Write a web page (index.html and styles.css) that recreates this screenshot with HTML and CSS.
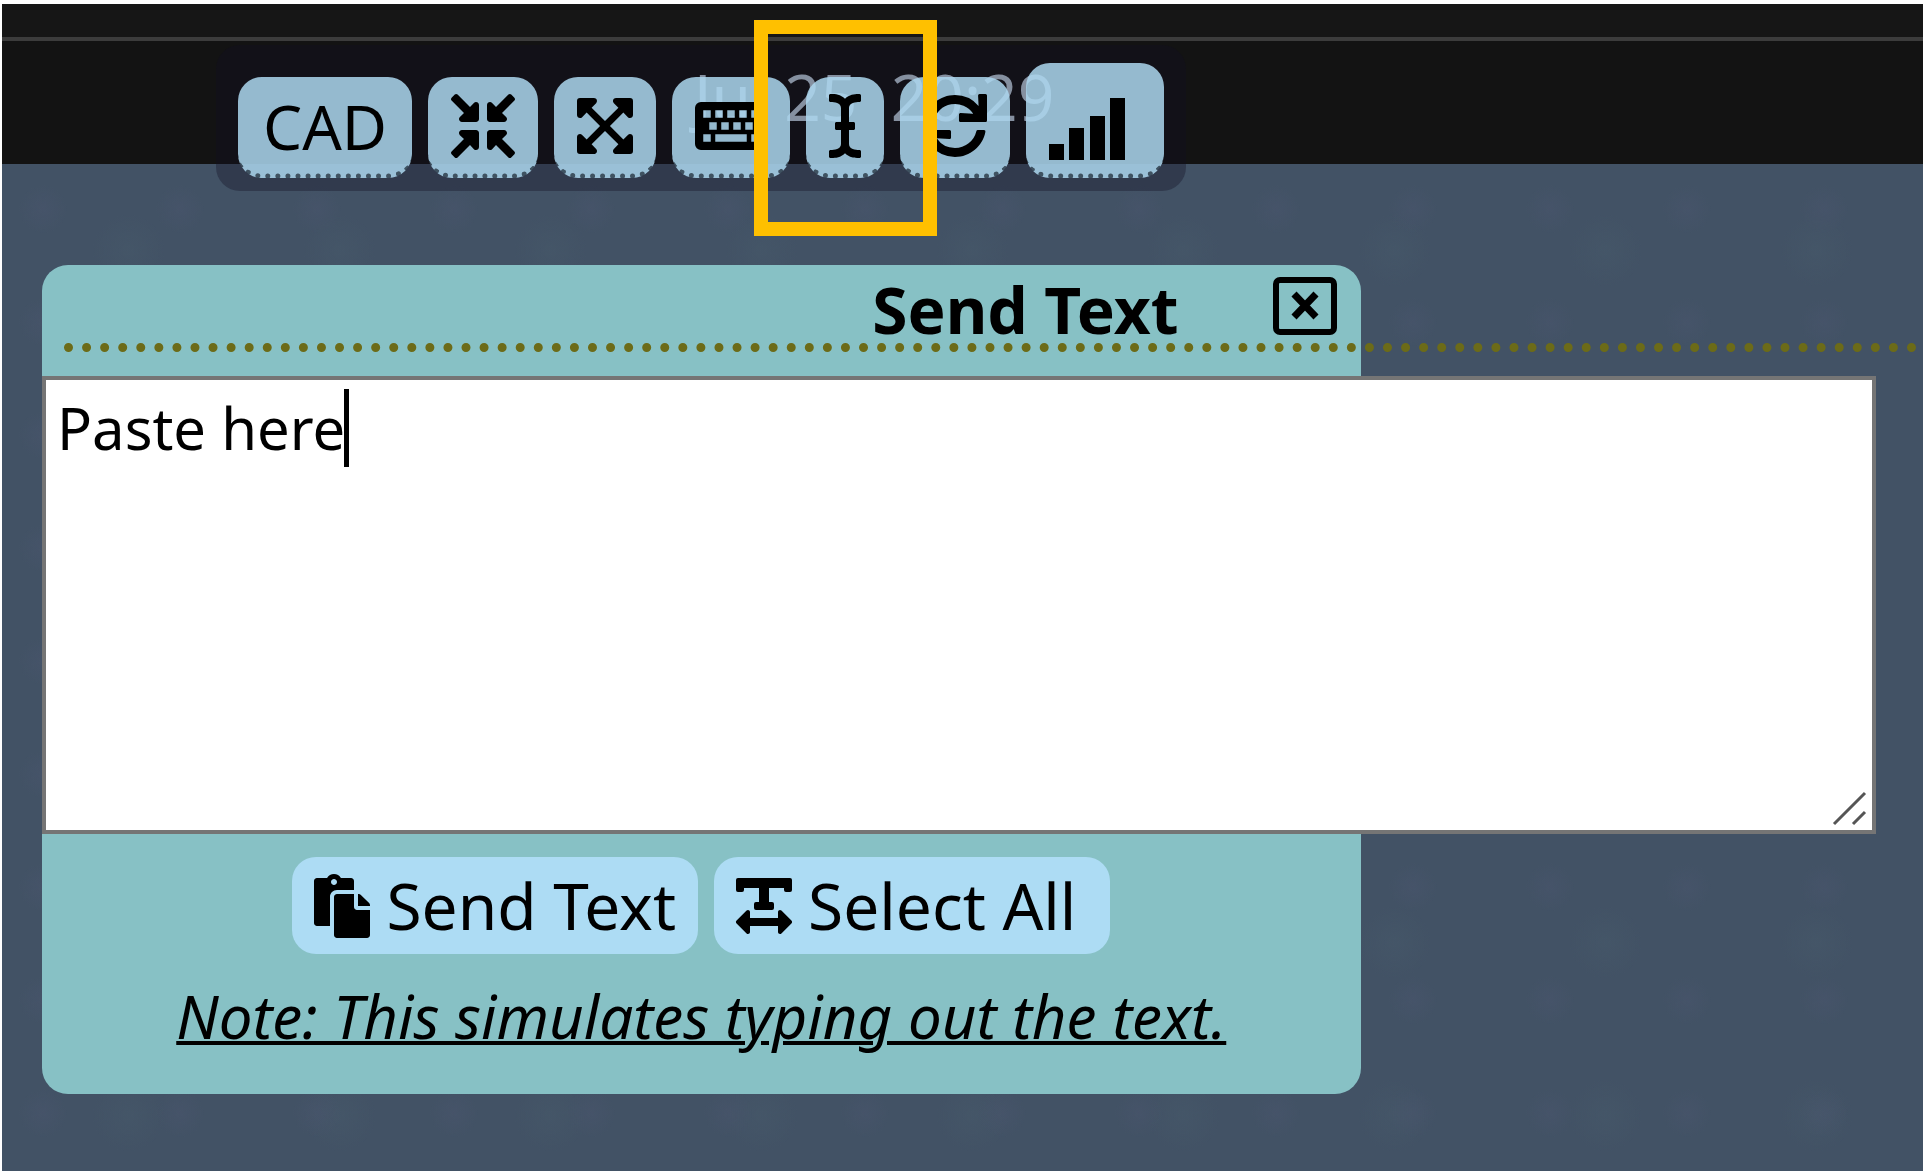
FILE: index.html
```html
<!DOCTYPE html>
<html lang="en">
<head>
<meta charset="utf-8">
<meta name="viewport" content="width=device-width, initial-scale=1">
<title>Send Text</title>
<link rel="stylesheet" href="styles.css">
</head>
<body>
<div class="screen">
  <div class="window-strip"></div>
  <header class="top-bar"><time class="clock">Jul 25  20:29</time></header>

  <div class="toolbar" role="toolbar" aria-label="Console controls">
    <button class="tool tool-text" type="button">CAD</button>
    <button class="tool" type="button" aria-label="Shrink">
      <svg width="64" height="64" viewBox="0 0 512 512"><path d="M200 288H88c-21.400 0-32.100 25.800-17 41l32.900 31-99.200 99.300c-6.200 6.200-6.200 16.400 0 22.600l25.400 25.400c6.200 6.200 16.400 6.200 22.600 0L152 408l31.100 33c15.100 15.100 40.900 4.400 40.900-17V312c0-13.300-10.700-24-24-24zm112-64h112c21.400 0 32.100-25.900 17-41l-33-31 99.300-99.300c6.200-6.200 6.200-16.400 0-22.600L481.900 4.700c-6.200-6.200-16.400-6.200-22.600 0L360 104l-31.100-33C313.800 55.900 288 66.600 288 88v112c0 13.300 10.700 24 24 24zm96 136l33-31.100c15.100-15.100 4.400-40.900-17-40.900H312c-13.300 0-24 10.700-24 24v112c0 21.400 25.900 32.100 41 17l31-32.900 99.300 99.300c6.200 6.200 16.400 6.200 22.600 0l25.400-25.400c6.200-6.200 6.200-16.400 0-22.600L408 360zM183 71.100L152 104 52.700 4.700c-6.200-6.200-16.400-6.200-22.600 0L4.700 30.100c-6.200 6.200-6.200 16.400 0 22.600L104 152l-33 31.100C55.900 198.200 66.600 224 88 224h112c13.300 0 24-10.700 24-24V88c0-21.300-25.900-32-41-16.900z"/></svg>
    </button>
    <button class="tool" type="button" aria-label="Expand">
      <svg width="56" height="64" viewBox="0 0 448 512"><path d="M448 344v112a23.940 23.940 0 0 1-24 24H312c-21.390 0-32.090-25.900-17-41l36.200-36.200L224 295.600 116.770 402.900 153 439c15.090 15.100 4.390 41-17 41H24a23.940 23.940 0 0 1-24-24V344c0-21.400 25.890-32.100 41-17l36.190 36.200L184.460 256 77.180 148.700 41 185c-15.100 15.100-41 4.400-41-17V56a23.940 23.940 0 0 1 24-24h112c21.390 0 32.090 25.900 17 41l-36.200 36.200L224 216.400l107.230-107.300L295 73c-15.090-15.100-4.390-41 17-41h112a23.940 23.940 0 0 1 24 24v112c0 21.400-25.890 32.100-41 17l-36.190-36.200L263.540 256l107.280 107.300L407 327.100c15.100-15.200 41-4.500 41 16.900z"/></svg>
    </button>
    <button class="tool" type="button" aria-label="Keyboard">
      <svg width="72" height="64" viewBox="0 0 576 512"><path fill-rule="evenodd" d="M48 64h480a48 48 0 0 1 48 48v288a48 48 0 0 1-48 48H48a48 48 0 0 1-48-48V112a48 48 0 0 1 48-48zM66 130v60h60v-60zm96 0v60h60v-60zm96 0v60h60v-60zm96 0v60h60v-60zm96 0v60h60v-60zM114 226v60h60v-60zm96 0v60h60v-60zm96 0v60h60v-60zm96 0v60h60v-60zM66 322v60h60v-60zm96 0v60h252v-60zm288 0v60h60v-60z"/></svg>
    </button>
    <button class="tool" type="button" aria-label="Send text">
      <svg width="32" height="64" viewBox="0 0 256 512"><path d="M256 52.048V12.065C256 5.496 250.726.148 244.158.019 211.621-.621 166.469.011 128 37.959 90.266.736 46.979-.114 11.913.114 5.318.157 0 5.519 0 12.114v39.645c0 6.687 5.458 12.078 12.145 11.998C38.111 63.447 96 67.243 96 112.182V224H60c-6.627 0-12 5.373-12 12v40c0 6.627 5.373 12 12 12h36v112c0 44.932-56.075 48.031-83.950 47.959C5.404 447.942 0 453.306 0 459.952v39.983c0 6.569 5.274 11.917 11.842 12.046 32.537.64 77.689.008 116.158-37.940 37.734 37.223 81.021 38.073 116.087 37.845 6.595-.043 11.913-5.405 11.913-12V460.240c0-6.687-5.458-12.078-12.145-11.998C217.889 448.553 160 444.939 160 400V288h36c6.627 0 12-5.373 12-12v-40c0-6.627-5.373-12-12-12h-36V112.182c0-44.932 56.075-48.213 83.950-48.142 6.646.018 12.050-5.346 12.050-11.992z"/></svg>
    </button>
    <button class="tool" type="button" aria-label="Reconnect">
      <svg width="64" height="64" viewBox="0 0 512 512"><path d="M440.650 12.570l4 82.770A247.160 247.160 0 0 0 255.830 8C134.730 8 33.910 94.920 12.290 209.820A12 12 0 0 0 24.090 224h49.050a12 12 0 0 0 11.670-9.260 175.910 175.910 0 0 1 317-56.940l-101.460-4.860a12 12 0 0 0-12.570 12v47.410a12 12 0 0 0 12 12H500a12 12 0 0 0 12-12V12a12 12 0 0 0-12-12h-47.370a12 12 0 0 0-11.980 12.570zM255.830 432a175.610 175.610 0 0 1-146-77.800l101.800 4.870a12 12 0 0 0 12.570-12v-47.400a12 12 0 0 0-12-12H12a12 12 0 0 0-12 12V500a12 12 0 0 0 12 12h47.350a12 12 0 0 0 12-12.600l-4.150-82.570A247.170 247.170 0 0 0 255.830 504c121.110 0 221.930-86.920 243.550-201.820a12 12 0 0 0-11.800-14.180h-49.050a12 12 0 0 0-11.670 9.260A175.860 175.860 0 0 1 255.830 432z"/></svg>
    </button>
    <button class="tool tool-signal" type="button" aria-label="Signal strength">
      <svg width="92" height="64" viewBox="0 0 92 64"><path d="M0 50h15v16H0zM20 34h15v32H20zM41 22h15v44H41zM61 4h15v62H61z"/></svg>
    </button>
  </div>
  <div class="highlight"></div>

  <main class="desktop">
    <section class="panel" aria-labelledby="panel-title">
      <div class="panel-head">
        <h1 class="panel-title" id="panel-title">Send Text</h1>
        <button class="close" type="button" aria-label="Close">
          <svg width="64" height="58" viewBox="0 0 64 58"><rect x="3" y="3" width="58" height="52" rx="4" fill="none" stroke="#000" stroke-width="6"/><path d="M21 17l22 23M43 17L21 40" fill="none" stroke="#000" stroke-width="7"/></svg>
        </button>
      </div>
      <hr class="rule">
      <div class="editor">
        <textarea class="text-input" aria-label="Text to send" spellcheck="false">Paste here</textarea>
        <span class="caret"></span>
        <svg class="grip" width="34" height="34" viewBox="0 0 34 34"><path d="M1 33L32 2M20 33L32 21" fill="none" stroke="#555" stroke-width="3"/></svg>
      </div>
      <div class="actions">
        <button class="action" type="button">
          <svg width="56" height="64" viewBox="0 0 448 512"><path d="M128 184c0-30.879 25.122-56 56-56h136V56c0-13.255-10.745-24-24-24h-80.610C204.306 12.890 183.637 0 160 0s-44.306 12.890-55.390 32H24C10.745 32 0 42.745 0 56v336c0 13.255 10.745 24 24 24h104V184zm32-144c13.255 0 24 10.745 24 24s-10.745 24-24 24-24-10.745-24-24 10.745-24 24-24zm184 248h104v200c0 13.255-10.745 24-24 24H184c-13.255 0-24-10.745-24-24V184c0-13.255 10.745-24 24-24h136v104c0 13.200 10.800 24 24 24zm104-38.059V256h-96v-96h6.059a24 24 0 0 1 16.970 7.029l65.941 65.941a24.002 24.002 0 0 1 7.030 16.971z"/></svg>
          Send Text
        </button>
        <button class="action" type="button">
          <svg width="56" height="64" viewBox="0 0 448 512"><path d="M432 32H16A16 16 0 0 0 0 48v80a16 16 0 0 0 16 16h32a16 16 0 0 0 16-16v-16h120v112h-24a16 16 0 0 0-16 16v32a16 16 0 0 0 16 16h128a16 16 0 0 0 16-16v-32a16 16 0 0 0-16-16h-24V112h120v16a16 16 0 0 0 16 16h32a16 16 0 0 0 16-16V48a16 16 0 0 0-16-16zm-68.690 260.690C354 283.360 336 288.360 336 304v48H112v-48c0-14.310-17.310-21.320-27.310-11.310l-80 80a16 16 0 0 0 0 22.620l80 80C94 484.640 112 479.640 112 464v-48h224v48c0 14.310 17.310 21.320 27.310 11.310l80-80a16 16 0 0 0 0-22.620z"/></svg>
          Select All
        </button>
      </div>
      <p class="note">Note: This simulates typing out the text.</p>
    </section>
  </main>
</div>
</body>
</html>
```
FILE: styles.css
```css
* {
  box-sizing: border-box;
}

body {
  margin: 0;
  padding: 4px 2px 2px;
  background: #fff;
  color: #000;
  font-family: "Noto Sans", sans-serif;
}

button {
  margin: 0;
  border: 0;
  color: inherit;
  font-family: inherit;
  cursor: pointer;
}

svg {
  display: block;
  flex: none;
  overflow: visible;
}

.screen {
  position: relative;
  display: flex;
  flex-direction: column;
  min-height: calc(100vh - 6px);
  overflow: hidden;
}

.window-strip {
  height: 37px;
  border-bottom: 4px solid #3c3c3c;
  background: #161616;
}

.top-bar {
  height: 123px;
  padding: 14px 0 0 692px;
  background: #131313;
}

.clock {
  color: #c4d6e4;
  font-size: 64px;
  line-height: 84px;
  white-space: pre;
}

/* Floating console controls */
.toolbar {
  position: absolute;
  top: 41px;
  left: 214px;
  display: flex;
  align-items: flex-end;
  gap: 16px;
  padding: 18px 22px 13px;
  border-radius: 24px;
  background: rgba(18, 14, 34, 0.35);
}

.tool {
  display: flex;
  align-items: center;
  justify-content: center;
  height: 101px;
  padding: 17px 23px 15px;
  border-bottom: 5px dotted #3f5261;
  border-radius: 24px;
  background: rgba(173, 216, 240, 0.85);
  font-size: 62px;
  line-height: 64px;
}

.tool-text {
  min-width: 174px;
}

.tool-signal {
  height: 115px;
  padding-top: 31px;
}

.highlight {
  position: absolute;
  top: 16px;
  left: 752px;
  width: 183px;
  height: 216px;
  border: 14px solid #ffc000;
  pointer-events: none;
}

.desktop {
  flex: 1;
  padding: 101px 40px 74px;
  background:
    radial-gradient(circle at 30% 40%, rgba(76, 86, 112, 0.35), transparent 24px) 0 0 / 137px 113px,
    radial-gradient(circle at 60% 50%, rgba(72, 92, 108, 0.35), transparent 36px) 0 0 / 211px 173px,
    #425265;
}

/* Send Text panel */
.panel {
  width: calc(70vw - 29px);
  padding: 12px 0 32px;
  border-radius: 26px;
  background: #87c1c5;
}

.panel-head {
  display: flex;
  justify-content: flex-end;
  gap: 94px;
  height: 66px;
  padding-right: 24px;
}

.panel-title {
  margin: 0;
  font-size: 64px;
  line-height: 66px;
}

.close {
  align-self: flex-start;
  padding: 0;
  background: none;
}

/* The rule and the editor run wider than the panel */
.rule {
  width: calc(100vw - 72px);
  height: 0;
  margin: 0 0 24px 22px;
  border: 0;
  border-top: 9px dotted #6c6b18;
}

.editor {
  position: relative;
  width: calc(100vw - 91px);
}

.text-input {
  display: block;
  width: 100%;
  height: 458px;
  padding: 6px 11px;
  border: 4px solid #757575;
  border-radius: 0;
  outline: 0;
  background: #fff;
  color: #000;
  font-family: inherit;
  font-size: 58px;
  line-height: 84px;
  resize: none;
}

.caret {
  position: absolute;
  top: 13px;
  left: 302px;
  width: 5px;
  height: 78px;
  background: #000;
}

.grip {
  position: absolute;
  right: 9px;
  bottom: 9px;
}

.actions {
  display: flex;
  justify-content: center;
  gap: 16px;
  padding-top: 23px;
}

.action {
  display: flex;
  align-items: center;
  gap: 16px;
  min-width: 396px;
  height: 97px;
  padding: 0 22px;
  border-radius: 24px;
  background: #addcf4;
  font-size: 64px;
  line-height: 96px;
}

.note {
  margin: 20px 0 0;
  padding-bottom: 4px;
  font-size: 60px;
  font-style: italic;
  line-height: 84px;
  text-align: center;
  text-decoration: underline;
  text-decoration-thickness: 4px;
}
```
